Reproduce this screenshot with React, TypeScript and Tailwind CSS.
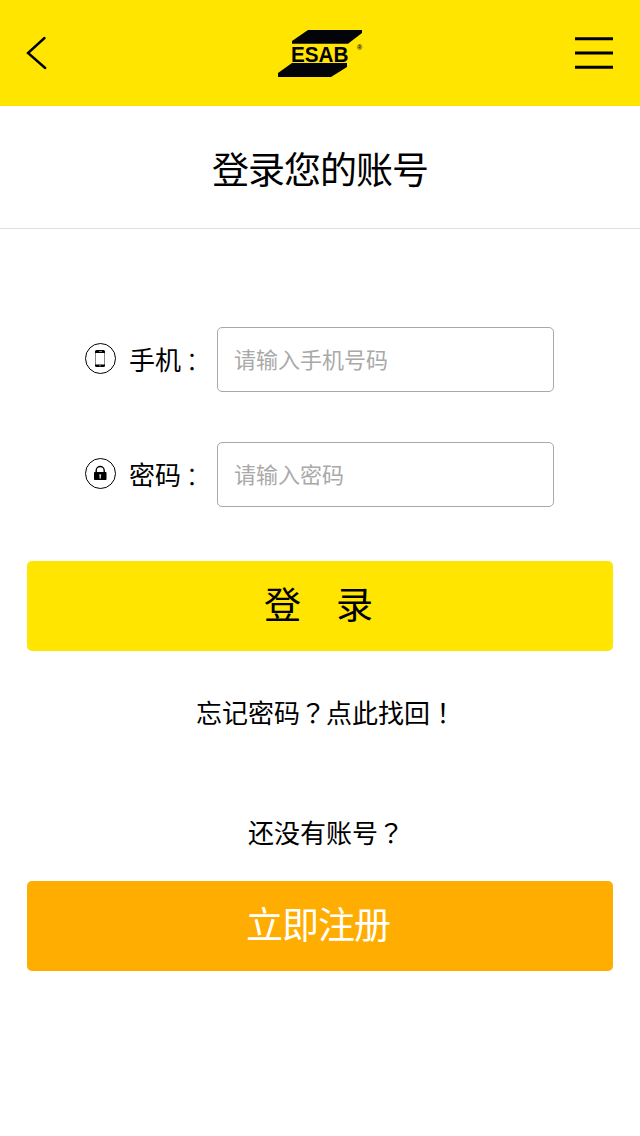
import React, { useState } from "react";

const fields = [
  { id: "phone", label: "手机", placeholder: "请输入手机号码", type: "tel", Icon: PhoneIcon },
  { id: "password", label: "密码", placeholder: "请输入密码", type: "password", Icon: LockIcon },
];

// Full-width punctuation sits in the middle of its cell
function Mark({ children }: { children: React.ReactNode }) {
  return <span className="font-['Noto_Sans_CJK_TC',sans-serif]">{children}</span>;
}

function Logo() {
  return (
    <svg width="86" height="48" viewBox="0 0 86 48" fill="#03030a" aria-label="ESAB">
      <path d="M31 0H85V3L71 13.700H15V11Z" />
      <path d="M15 33H70V37L54 47H1V43Z" />
      <text
        x="14"
        y="31.5"
        fontSize="22.5"
        fontWeight="bold"
        textLength="57.5"
        lengthAdjust="spacingAndGlyphs"
        className="font-['Liberation_Sans',sans-serif]"
      >
        ESAB
      </text>
      <text x="80" y="20" fontSize="7" fontWeight="bold" className="font-['Liberation_Sans',sans-serif]">
        ®
      </text>
    </svg>
  );
}

function PhoneIcon() {
  return (
    <svg width="32" height="32" viewBox="0 0 32 32" fill="none">
      <circle cx="15.5" cy="15.5" r="15" stroke="#000" />
      <path d="M10.500 9V23M19.500 9V23" stroke="#888" />
      <path
        d="M10 10V8.500Q10 7 11.500 7H18.500Q20 7 20 8.500V10ZM10 21.500H20V22.500Q20 24 18.500 24H11.500Q10 24 10 22.500Z"
        fill="#000"
      />
      <path d="M14 8.500H17M14.200 22.800H16" stroke="#aaa" strokeWidth="0.8" />
    </svg>
  );
}

function LockIcon() {
  return (
    <svg width="32" height="32" viewBox="0 0 32 32" fill="none">
      <circle cx="15.5" cy="15.5" r="15" stroke="#000" />
      <path d="M11.200 15V12.500a4 4 0 0 1 8 0V15" stroke="#000" strokeWidth="1.4" />
      <rect x="9" y="14" width="12.5" height="8" rx="0.8" fill="#000" />
      <path d="M14.200 17H16.200M15.200 17V20.500" stroke="#fff" strokeWidth="1.2" />
    </svg>
  );
}

export default function App() {
  const [values, setValues] = useState<Record<string, string>>({});

  return (
    <div className="w-[640px] min-h-screen bg-white text-black font-['Noto_Sans_CJK_SC',sans-serif]">
      {/* Top bar */}
      <header className="grid grid-cols-3 items-center h-[106px] px-[26px] bg-[#ffe500]">
        <button type="button" aria-label="返回">
          <svg width="22" height="34" viewBox="0 0 22 34" fill="none" stroke="#000" strokeWidth="2.4">
            <path d="M18.500 2L2 17L19.200 32" strokeLinecap="round" />
          </svg>
        </button>
        <div className="flex justify-center pt-0.5">
          <Logo />
        </div>
        <button type="button" aria-label="菜单" className="justify-self-end mr-px">
          <svg width="38" height="34" viewBox="0 0 38 34" stroke="#000" strokeWidth="3">
            <path d="M0 2.700H38M0 17H38M0 31.300H38" />
          </svg>
        </button>
      </header>

      <h1 className="h-[123px] pt-1 flex items-center justify-center border-b border-[#e0e0e0] text-[37px] tracking-[-1px]">
        登录您的账号
      </h1>

      <form className="px-[27px] pt-[98px]" onSubmit={(e) => e.preventDefault()}>
        <div className="flex flex-col gap-[50px] pl-[58px]">
          {fields.map(({ id, label, placeholder, type, Icon }) => (
            <div key={id} className="flex items-center h-[65px]">
              <div className="pb-0.5">
                <Icon />
              </div>
              <label htmlFor={id} className="w-[88px] ml-3 pb-0.5 text-[26px] leading-none whitespace-nowrap">
                {label}
                <span className="relative top-0.5 -left-0.5 font-light">
                  <Mark>：</Mark>
                </span>
              </label>
              <input
                id={id}
                type={type}
                placeholder={placeholder}
                value={values[id] ?? ""}
                onChange={(e) => setValues({ ...values, [id]: e.target.value })}
                className="w-[337px] h-[65px] px-4 pb-1 border border-[#a9a9a9] rounded-[5px] text-[22px] placeholder:text-[#a9a9a9] outline-none"
              />
            </div>
          ))}
        </div>

        <button
          type="submit"
          className="block w-full h-[90px] mt-[54px] pr-1 pb-1 rounded-[5px] bg-[#ffe500] text-[37px] tracking-[-1px]"
        >
          登　录
        </button>
      </form>

      <a href="#" className="block mt-[41px] pl-3 text-center text-[26px] leading-10">
        忘记密码<Mark>？</Mark>点此找回<Mark>！</Mark>
      </a>

      <p className="mt-20 pl-3 text-center text-[26px] leading-10">
        还没有账号<Mark>？</Mark>
      </p>

      <div className="px-[27px] pt-[29px]">
        <button
          type="button"
          className="block w-full h-[90px] pr-1 pb-1 rounded-[5px] bg-[#ffad00] text-[37px] tracking-[-1px] text-white"
        >
          立即注册
        </button>
      </div>
    </div>
  );
}
